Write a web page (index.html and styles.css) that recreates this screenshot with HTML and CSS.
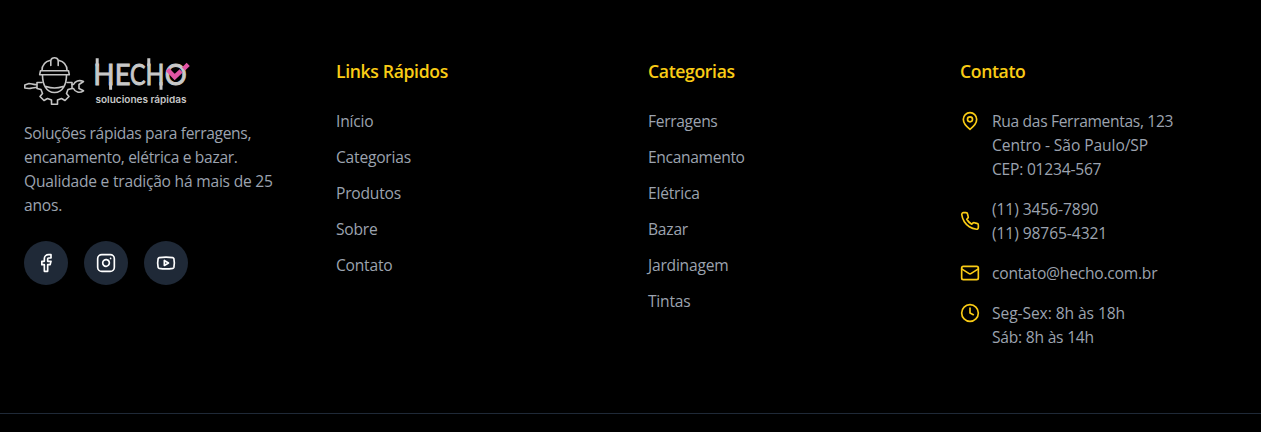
FILE: index.html
```html
<!DOCTYPE html>
<html lang="pt-BR">
<head>
<meta charset="utf-8">
<title>Hecho</title>
<link rel="stylesheet" href="styles.css">
</head>
<body>
<footer class="footer">
  <div class="columns">
    <section class="brand">
      <svg class="logo" width="166" height="48" viewBox="0 0 166 48" fill="none">
        <g stroke="#c4c4c4" stroke-width="1.6" stroke-linejoin="round" stroke-linecap="round">
          <path d="M16.500 13.700h28l.8 4h-29.600zM18 13.500C18 8 21 4.500 26.500 3.200M34.500 3.200C40 4.500 43 8 43 13.500M26.800 8.500V3.500Q27.500 .8 30.500 .8T34.200 3.500v5"/>
          <path d="M18.500 18C18.500 27 22 35.500 30.500 35.500S42.500 27 42.500 18M22 29.500Q30.500 32.500 39 29.500"/>
          <path d="M18 25.500h-5v6l4 1 1.500 4-2.500 3 4 4 3.500-2 4 1.500v4.200h6V43l4-1.500 3.500 2 4-4-2.500-3 1.500-4 4-1v-6h-5"/>
          <path d="M12.500 27.500C9 28 8 26.500 5 26.500L.8 28v3L5 31.500c3 0 4-1.300 7.500-1"/>
          <path d="M48 27.500h1.500C51 24 55 22.500 59.500 24.500L55 27.500v4l4.500 2.300C55.500 36.500 51 35 49.500 31.500H48"/>
        </g>
        <g class="logo-name">
          <text x="69.200" y="27.500">H</text>
          <text x="90.800" y="27.500" textLength="15.800" lengthAdjust="spacingAndGlyphs">E</text>
          <text x="106" y="27.500" textLength="15.500" lengthAdjust="spacingAndGlyphs">C</text>
          <text x="121.400" y="27.500" textLength="19" lengthAdjust="spacingAndGlyphs">H</text>
          <text x="140.700" y="27.500" textLength="22" lengthAdjust="spacingAndGlyphs">O</text>
        </g>
        <path d="M73.200 1.300v8M86.600 25v7.700M124.800 1.300v8M137 25v7.700" stroke="#c8c8c8" stroke-width="3"/>
        <path d="M143.500 12.500l7.200 7.500 6.500-6.200M159.500 12l4.700-4.700" stroke="#e254a4" stroke-width="4.500"/>
        <text class="logo-tagline" x="71.500" y="45.600" textLength="91" lengthAdjust="spacingAndGlyphs">soluciones rápidas</text>
      </svg>
      <p class="about"><span class="tight">Soluções rápidas para ferragens,</span><br><span class="tight">encanamento, elétrica e bazar.</span><br>Qualidade e tradição há mais de 25<br>anos.</p>
      <div class="social">
        <a class="social-link"><svg class="icon" viewBox="0 0 24 24"><path d="M18 2h-3a5 5 0 0 0-5 5v3H7v4h3v8h4v-8h3l1-4h-4V7a1 1 0 0 1 1-1h3z"/></svg></a>
        <a class="social-link"><svg class="icon" viewBox="0 0 24 24"><rect x="2" y="2" width="20" height="20" rx="5"/><path d="M16 11.370A4 4 0 1 1 12.630 8 4 4 0 0 1 16 11.370zM17.500 6.500h.01"/></svg></a>
        <a class="social-link"><svg class="icon" viewBox="0 0 24 24"><path d="M2.500 17a24.120 24.120 0 0 1 0-10 2 2 0 0 1 1.400-1.400 49.560 49.560 0 0 1 16.200 0A2 2 0 0 1 21.500 7a24.120 24.120 0 0 1 0 10 2 2 0 0 1-1.400 1.400 49.550 49.550 0 0 1-16.200 0A2 2 0 0 1 2.500 17M10 15l5-3-5-3z"/></svg></a>
      </div>
    </section>
    <section>
      <h3 class="title">Links Rápidos</h3>
      <ul class="links"><li>Início</li><li>Categorias</li><li>Produtos</li><li>Sobre</li><li>Contato</li></ul>
    </section>
    <section>
      <h3 class="title">Categorias</h3>
      <ul class="links"><li class="tight">Ferragens</li><li class="tight">Encanamento</li><li>Elétrica</li><li>Bazar</li><li>Jardinagem</li><li>Tintas</li></ul>
    </section>
    <section>
      <h3 class="title">Contato</h3>
      <ul class="contact">
        <li><svg class="icon" viewBox="0 0 24 24"><path d="M20 10c0 6-8 12-8 12s-8-6-8-12a8 8 0 0 1 16 0z"/><circle cx="12" cy="10" r="3"/></svg><span><span class="tight">Rua das Ferramentas, 123</span><br><span class="loose">Centro - São Paulo/SP</span><br>CEP: 01234-567</span></li>
        <li class="phone"><svg class="icon" viewBox="0 0 24 24"><path d="M22 16.920v3a2 2 0 0 1-2.180 2 19.790 19.790 0 0 1-8.630-3.070 19.500 19.500 0 0 1-6-6 19.790 19.790 0 0 1-3.070-8.670A2 2 0 0 1 4.110 2h3a2 2 0 0 1 2 1.720 12.840 12.840 0 0 0 .7 2.810 2 2 0 0 1-.45 2.110L8.090 9.910a16 16 0 0 0 6 6l1.270-1.270a2 2 0 0 1 2.110-.45 12.840 12.840 0 0 0 2.810.7A2 2 0 0 1 22 16.920z"/></svg><span class="loose">(11) 3456-7890<br>(11) 98765-4321</span></li>
        <li><svg class="icon" viewBox="0 0 24 24"><rect x="2" y="4" width="20" height="16" rx="2"/><path d="M22 7l-8.970 5.700a1.940 1.940 0 0 1-2.060 0L2 7"/></svg><span>contato@hecho.com.br</span></li>
        <li><svg class="icon" viewBox="0 0 24 24"><circle cx="12" cy="12" r="10"/><path d="M12 6v6l4 2"/></svg><span><span class="loose">Seg-Sex: 8h às 18h</span><br>Sáb: 8h às 14h</span></li>
      </ul>
    </section>
  </div>
</footer>
</body>
</html>
```
FILE: styles.css
```css
* { box-sizing: border-box; margin: 0; padding: 0; }
body {
  background: #000;
  color: #9ca3af;
  font: 15.6px/24px "Open Sans", "Noto Sans", sans-serif;
  letter-spacing: -.22px;
  overflow: hidden;
}
.tight { letter-spacing: -.33px; }
.loose { letter-spacing: -.08px; }
.footer { height: 432px; padding-top: 57px; }
.columns {
  display: grid;
  grid-template-columns: repeat(4, 264px);
  gap: 48px;
  height: 357px;
  padding-left: 24px;
  border-bottom: 1px solid #1f2937;
}
ul { list-style: none; }
.logo { display: block; margin-bottom: 16px; overflow: visible; letter-spacing: 0; }
.logo-name { font: 400 28px Lato, sans-serif; fill: #c8c8c8; stroke: #c8c8c8; stroke-width: .9px; }
.logo-tagline { font: 600 9.3px Inter, sans-serif; fill: #c8c8c8; }
.about { white-space: nowrap; }
.social { display: flex; gap: 16px; margin-top: 24px; }
.social-link {
  display: flex;
  align-items: center;
  justify-content: center;
  width: 44px;
  height: 44px;
  border-radius: 50%;
  background: #1f2937;
  color: #fff;
}
.icon {
  flex: none;
  width: 20px;
  height: 20px;
  fill: none;
  stroke: currentColor;
  stroke-width: 2;
  stroke-linecap: round;
  stroke-linejoin: round;
}
.title {
  color: #facc15;
  font-size: 17.6px;
  font-weight: 600;
  line-height: 28px;
  letter-spacing: -.35px;
  margin-bottom: 24px;
}
.links { display: flex; flex-direction: column; gap: 12px; }
.contact { display: flex; flex-direction: column; gap: 16px; white-space: nowrap; }
.contact li { display: flex; gap: 12px; }
.contact .icon { color: #facc15; margin-top: 2px; }
.contact .phone { align-items: center; }
.contact .phone .icon { margin-top: 0; }
```
